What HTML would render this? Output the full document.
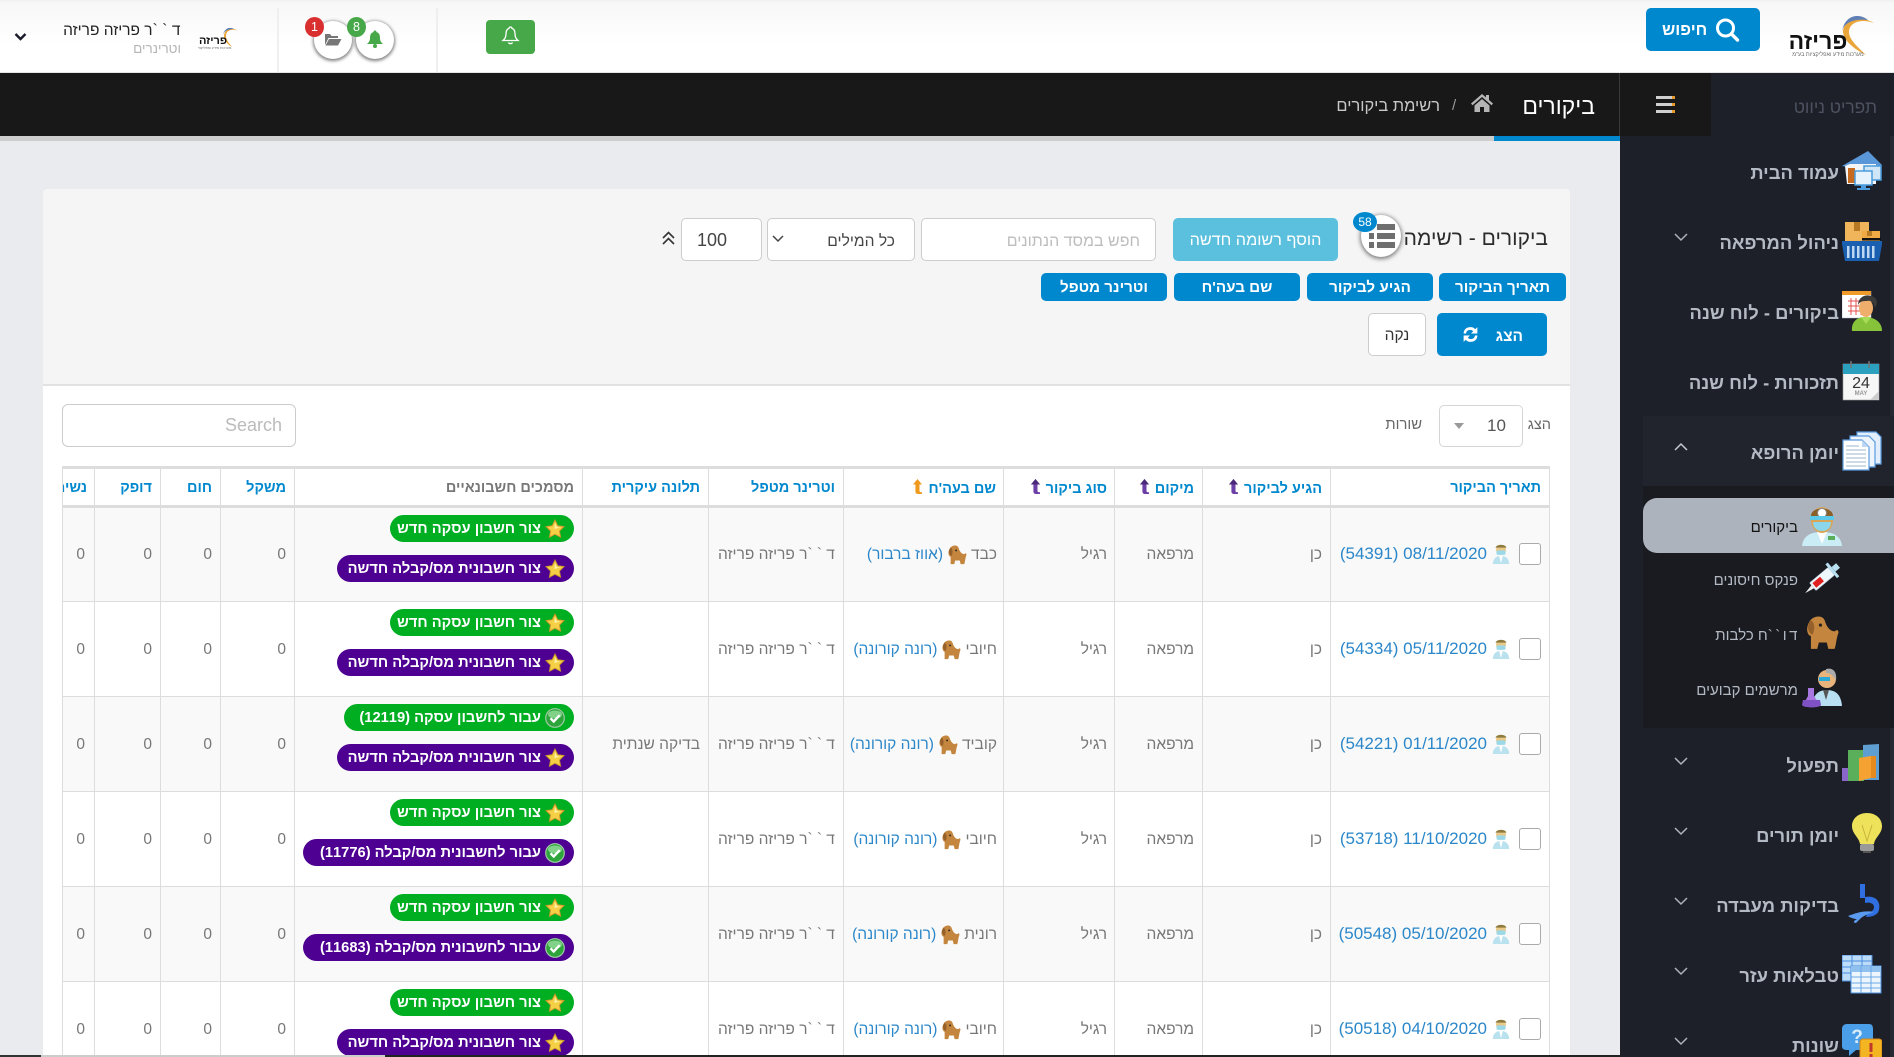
<!DOCTYPE html>
<html lang="he" dir="rtl"><head><meta charset="utf-8"><title>ביקורים</title>
<style>
*{box-sizing:border-box}
html,body{margin:0;padding:0;width:1894px;height:1057px;overflow:hidden;background:#e9ebef;font-family:"Liberation Sans","Noto Sans CJK JP",sans-serif;color:#333}
#w{position:absolute;left:0;top:0;width:1894px;height:1057px;overflow:hidden;background:#e9ebef}
.a{position:absolute;white-space:nowrap}
svg{display:block}
#top{left:0;top:0;width:1894px;height:73px;background:linear-gradient(#f1f1f2 0,#f1f1f2 1px,#f7f7f7 2px,#fff 45px);border-bottom:1px solid #e5e5e5}
.nav{font-weight:bold;font-size:18.4px;color:#b4bac4;right:55px;line-height:20px}
.sub{font-size:15px;color:#b4bac4;right:96px;line-height:20px}
.ic{width:40px;height:40px}
.chev{left:1673px;width:16px;height:10px}
table{position:absolute;left:62px;top:466px;width:1487px;table-layout:fixed;border-collapse:collapse;direction:rtl;background:#fff}
th{height:39px;padding:1px 8px 0;text-align:right;font-size:14.5px;color:#0088cf;border:1px solid #ddd;border-top:3px solid #ddd;border-bottom:3px solid #ddd;white-space:nowrap;overflow:hidden;font-weight:bold}
th:nth-child(4),th:nth-child(5){padding-right:7px}
th svg{display:inline-block;vertical-align:-2px;margin-right:5px}
td{height:95px;padding:1px 8px 0;text-align:right;font-size:15.5px;color:#777;border:1px solid #ddd;white-space:nowrap;overflow:hidden}
td:nth-child(4){padding-right:7px}
td:nth-child(5){padding-right:6px}
td:nth-child(12){padding-right:9px}
tr.o td{background:#f9f9f9}
td.p{vertical-align:top;padding-top:7px}
td a{color:#2b87c9}
td a.d{font-size:17px}
.bt{letter-spacing:4.2px;margin-right:-4px}
.pill{display:flex;align-items:center;height:27px;border-radius:14px;color:#fff;font-weight:bold;font-size:14.7px;padding:0 9px;margin-right:0;margin-left:auto;margin-bottom:13px;overflow:hidden}
.pill svg{margin-left:4px;flex:none}
.g{background:#00ae22}.v{background:#4e0092}
.cb{display:inline-block;width:22px;height:22px;border:1px solid #aaa;border-radius:3px;background:#fff;vertical-align:middle;position:relative;top:-1px}
.vi{display:inline-block;vertical-align:middle;margin:0 8px 0 4px;position:relative;top:-1px}
.dog{display:inline-block;vertical-align:middle;margin:0 4px}
.btn{background:#0088cf;color:#fff;border-radius:5px;text-align:center;font-size:15.2px;font-weight:bold;height:28px;line-height:30px;top:273px}
.inp{background:#fff;border:1px solid #ccc;border-radius:5px;height:43px;top:218px}
</style></head><body><div id="w">
<svg width="0" height="0" style="position:absolute"><defs>
<symbol id="star" viewBox="0 0 20 20"><path d="M10 1l2.8 5.7 6.2.9-4.5 4.4 1.1 6.2L10 15.3l-5.6 3 1.1-6.3L1 7.6l6.2-.9z" fill="#f5cf45" stroke="#c9952a" stroke-width=".9"/><path d="M10 4l1.8 4 3.6.5-6 1.5z" fill="#fdf3a8"/></symbol>
<symbol id="chk" viewBox="0 0 20 20"><circle cx="10" cy="10" r="9.3" fill="#2da53b" stroke="#9fc9a5" stroke-width="1.2"/><ellipse cx="10" cy="6.5" rx="7" ry="4" fill="#9fe0a4" opacity=".75"/><path d="M5.5 10.3l3.2 3.2 6-6.3" fill="none" stroke="#fff" stroke-width="2.4"/></symbol>
<symbol id="srt" viewBox="0 0 11 16"><path d="M5.5 0L10 5.5H7.5V12c0 1 .8 1.4 2.5 1.2V15H6c-1.6 0-2.6-1-2.6-2.6V5.5H1z" fill="#6b3fa6"/><path d="M5.5 0L10 5.5H1z" fill="#4a2a78"/></symbol>
<symbol id="srto" viewBox="0 0 11 16"><path d="M5.5 0L10 5.5H7.5V12c0 1 .8 1.4 2.5 1.2V15H6c-1.6 0-2.6-1-2.6-2.6V5.5H1z" fill="#ef9a1e"/></symbol>
<symbol id="vet" viewBox="0 0 22 24"><path d="M2 23c0-6 4-9 9-9s9 3 9 9z" fill="#b9e2ee"/><path d="M9 14l2 8 2-8z" fill="#fff"/><circle cx="11" cy="7.500" r="5.500" fill="#e9c98a"/><path d="M5 5c1-4 11-4 12 0z" fill="#8d7a3c"/><rect x="6" y="8" width="10" height="5" rx="2" fill="#9bd8e8"/></symbol>
<symbol id="dg" viewBox="0 0 22 24"><path d="M3 5c2-4 9-5 10 0 1 3 3 6 6 6 2-2 3 0 2 2-1 3-1 6-2 9h-4l-1-4-5 0-1 4H4l0-8C1 13 1 8 3 5z" fill="#c4863e"/><path d="M4 4c2 1 3 5 1 9-3-1-4-6-1-9z" fill="#96602a"/><circle cx="10" cy="7" r="1" fill="#222"/></symbol>
</defs></svg>

<!-- sidebar -->
<div class="a" style="left:1620px;top:73px;width:274px;height:984px;background:#1e2029"></div>
<div class="a" style="left:1890px;top:136px;width:4px;height:280px;background:#272a33"></div>
<div class="a" style="left:1890px;top:728px;width:4px;height:329px;background:#272a33"></div>

<!-- top bar -->
<div class="a" id="top"></div>
<div class="a" style="left:277px;top:8px;width:2px;height:64px;background:#efefef"></div>
<div class="a" style="left:436px;top:8px;width:2px;height:64px;background:#efefef"></div>
<svg class="a" style="left:14px;top:32px" width="13" height="10" viewBox="0 0 13 10"><path d="M1.500 2l5 5 5-5" fill="none" stroke="#1a1a2a" stroke-width="2.400"/></svg>
<div class="a" style="right:1713px;top:21px;font-size:15.500px;line-height:20px;color:#222"><span style="letter-spacing:4.500px;margin-right:-4px">ד``</span>ר פריזה פריזה</div>
<div class="a" style="right:1713px;top:40px;font-size:13.500px;line-height:18px;color:#b5b5b5">וטרינרים</div>
<!-- small logo -->
<svg class="a" style="left:198px;top:26px" width="42" height="26" viewBox="0 0 42 26"><path d="M40 5C33 2 28 5 28 10c0 4 3 7 6 11-5-3-8-7-8-11C26 4 33 0 40 5z" fill="#e9a63a"/><path d="M36 3C31 0 26 3 25 9 26 5 30 3 36 3z" fill="#5a7bb0"/><text x="15" y="18" text-anchor="middle" font-size="11" font-weight="bold" fill="#111" font-family="Liberation Sans">פריזה</text><text x="15" y="23" text-anchor="middle" font-size="3.500" fill="#666" font-family="Liberation Sans">מערכות מידע ואפליקציות</text></svg>
<!-- circles -->
<div class="a" style="left:314px;top:21px;width:38px;height:38px;border-radius:50%;background:#fff;box-shadow:0 1px 3px 1px rgba(0,0,0,.5)"></div>
<div class="a" style="left:356px;top:21px;width:38px;height:38px;border-radius:50%;background:#fff;box-shadow:0 1px 3px 1px rgba(0,0,0,.5)"></div>
<svg class="a" style="left:324px;top:33px" width="18" height="13" viewBox="0 0 18 13"><path d="M1 12V1h5l1.500 2H14v2H4.500L1 12z" fill="#777"/><path d="M1.500 12.500L5 6h12.500l-3.500 6.500z" fill="#777"/></svg>
<svg class="a" style="left:366px;top:30px" width="18" height="18" viewBox="0 0 18 18"><path d="M9 0.500c1 0 1.500.6 1.500 1.500 3 1 3.500 3.500 3.500 6 0 3 1 4 3 6H1c2-2 3-3 3-6 0-2.500.5-5 3.500-6C7.500 1.100 8 .5 9 .5z" fill="#47a849"/><circle cx="9" cy="16" r="2" fill="#47a849"/></svg>
<div class="a" style="left:305px;top:17px;width:19px;height:20px;border-radius:50%;background:#d92f2f;color:#fff;font-size:12.500px;line-height:20px;text-align:center;direction:ltr">1</div>
<div class="a" style="left:347px;top:17px;width:19px;height:20px;border-radius:50%;background:#47a849;color:#fff;font-size:12.500px;line-height:20px;text-align:center;direction:ltr">8</div>
<div class="a" style="left:486px;top:20px;width:49px;height:34px;border-radius:4px;background:#47a849"></div>
<svg class="a" style="left:501px;top:26px" width="19" height="20" viewBox="0 0 19 20"><path d="M9.500 1c.9 0 1.400.6 1.400 1.300 2.800.9 3.100 3.300 3.100 5.700 0 3.400 1.300 5 3 6.500H2c1.700-1.500 3-3.100 3-6.500 0-2.400.3-4.800 3.100-5.700C8.100 1.600 8.600 1 9.500 1z" fill="none" stroke="#fff" stroke-width="1.300"/><path d="M7.500 16.500c.5 1.500 3.500 1.500 4 0" fill="none" stroke="#fff" stroke-width="1.300"/></svg>
<div class="a" style="left:1646px;top:8px;width:114px;height:43px;background:#0088cf;border-radius:5px"></div>
<svg class="a" style="left:1715px;top:18px" width="25" height="24" viewBox="0 0 25 24"><circle cx="10.500" cy="10" r="8" fill="none" stroke="#fff" stroke-width="3"/><path d="M16.500 16l6 6" stroke="#fff" stroke-width="3.400" stroke-linecap="round"/></svg>
<div class="a" style="left:1662px;top:19px;font-size:16.500px;line-height:22px;font-weight:bold;color:#fff">חיפוש</div>
<!-- main logo -->
<svg class="a" style="left:1788px;top:12px" width="90" height="46" viewBox="0 0 90 46"><path d="M86 11C72 6 61 11 61 20c0 8 10 16 17 23C66 37 56 29 55 20 55 9 70 2 86 11z" fill="#eaa63a"/><path d="M80 8C70 0 56 4 54 20 55 12 64 6 80 8z" fill="#5f7fb5"/><text x="30" y="37" text-anchor="middle" font-size="23" font-weight="bold" fill="#111" font-family="Liberation Sans">פריזה</text><text x="40" y="44" text-anchor="middle" font-size="5.500" fill="#666" font-family="Liberation Sans">מערכות מידע ואפליקציות בע"מ</text></svg>

<!-- dark header -->
<div class="a" style="left:0;top:73px;width:1620px;height:63px;background:#181818"></div>
<div class="a" style="left:0;top:136px;width:1494px;height:5px;background:#cdcdcd"></div>
<div class="a" style="left:1494px;top:136px;width:126px;height:5px;background:#0088cf"></div>
<div class="a" style="left:1619px;top:73px;width:92px;height:63px;background:#181818;border-left:1px solid #3a3a3a"></div>
<div class="a" style="left:1656px;top:96px;width:19px;height:3px;background:linear-gradient(90deg,#cfcfcf 85%,#e59a2a 85%)"></div>
<div class="a" style="left:1656px;top:103px;width:19px;height:3px;background:linear-gradient(90deg,#cfcfcf 85%,#e59a2a 85%)"></div>
<div class="a" style="left:1656px;top:110px;width:19px;height:3px;background:linear-gradient(90deg,#cfcfcf 85%,#e59a2a 85%)"></div>
<div class="a" style="right:17px;top:97px;font-size:17.200px;line-height:20px;color:#4d5260">תפריט ניווט</div>
<div class="a" style="right:299px;top:92px;font-size:23px;line-height:28px;color:#fff">ביקורים</div>
<svg class="a" style="left:1470px;top:93px" width="24" height="20" viewBox="0 0 24 20"><path d="M12 1L1 10.500l1.500 1.700L12 4l9.500 8.200 1.500-1.700-4-3.500V2h-3v2.400z" fill="#b5b5b5"/><path d="M4.500 12.500L12 6l7.500 6.500V19h-5.500v-5h-4v5H4.500z" fill="#b5b5b5"/></svg>
<div class="a" style="left:1452px;top:96px;font-size:15px;line-height:20px;color:#999">/</div>
<div class="a" style="right:454px;top:96px;font-size:16.400px;line-height:20px;color:#c8c8c8">רשימת ביקורים</div>

<!-- panel -->
<div class="a" style="left:43px;top:189px;width:1527px;height:197px;background:#f5f5f5;border-bottom:2px solid #e2e2e2;border-radius:4px 4px 0 0"></div>
<div class="a" style="left:43px;top:386px;width:1527px;height:671px;background:#fff"></div>
<div class="a" style="right:346px;top:225px;font-size:21px;line-height:28px;color:#2b2b2b">ביקורים - רשימה</div>
<div class="a" style="left:1361px;top:215px;width:40px;height:42px;border-radius:50%;background:#fff;box-shadow:0 1px 4px 1px rgba(0,0,0,.5)"></div>
<svg class="a" style="left:1369px;top:224px" width="26" height="25" viewBox="0 0 26 25"><g fill="#6f6f6f"><rect x="8" y="0" width="18" height="6"/><rect x="8" y="9" width="18" height="6"/><rect x="8" y="18" width="18" height="6"/><rect x="0" y="9" width="5" height="6"/><rect x="0" y="18" width="5" height="6"/></g></svg>
<div class="a" style="left:1353px;top:212px;width:24px;height:20px;border-radius:50%;background:#0088cf;color:#fff;font-size:12px;line-height:20px;text-align:center;direction:ltr">58</div>
<div class="a" style="left:1173px;top:218px;width:165px;height:43px;border-radius:5px;background:#5bc0de;color:#fff;font-size:16.200px;line-height:45px;text-align:center">הוסף רשומה חדשה</div>
<div class="a inp" style="left:921px;width:235px;font-size:16px;line-height:45px;padding-right:15px;color:#bdbdbd">חפש במסד הנתונים</div>
<div class="a inp" style="left:767px;width:148px;font-size:15.600px;line-height:45px;padding-right:19px;color:#444">כל המילים</div>
<svg class="a" style="left:772px;top:235px" width="12" height="8" viewBox="0 0 12 8"><path d="M1 1l5 5 5-5" fill="none" stroke="#444" stroke-width="1.500"/></svg>
<div class="a inp" style="left:681px;width:81px;font-size:18px;line-height:43px;text-align:left;padding-left:15px;color:#444;direction:ltr">100</div>
<svg class="a" style="left:661px;top:231px" width="15" height="15" viewBox="0 0 15 15"><path d="M2 7l5.500-5.500L13 7M2 13l5.500-5.500L13 13" fill="none" stroke="#333" stroke-width="1.600"/></svg>
<div class="a btn" style="left:1439px;width:127px">תאריך הביקור</div>
<div class="a btn" style="left:1307px;width:126px">הגיע לביקור</div>
<div class="a btn" style="left:1174px;width:126px">שם בעה'ח</div>
<div class="a btn" style="left:1041px;width:126px">וטרינר מטפל</div>
<div class="a" style="left:1437px;top:313px;width:110px;height:43px;border-radius:5px;background:#0088cf"></div>
<div class="a" style="right:371px;top:327px;font-size:15.500px;font-weight:bold;line-height:20px;color:#fff">הצג</div>
<svg class="a" style="left:1461px;top:325px" width="19" height="19" viewBox="0 0 17 18"><path d="M2 8C2 4 5 2 8.500 2c2 0 3.500.7 4.500 2l2-2v6H9l2-2c-.7-1-1.700-1.400-2.700-1.400C6 4.600 4.500 6 4.300 8zM15 10c0 4-3 6-6.500 6-2 0-3.500-.7-4.500-2l-2 2v-6h6l-2 2c.7 1 1.700 1.400 2.700 1.400 2.300 0 3.800-1.400 4-3.400z" fill="#fff"/></svg>
<div class="a" style="left:1368px;top:313px;width:58px;height:43px;border-radius:5px;background:#fff;border:1px solid #ccc;font-size:15.500px;line-height:44px;text-align:center;color:#333">נקה</div>

<!-- table controls -->
<div class="a" style="right:343px;top:415px;font-size:14.500px;line-height:20px;color:#666">הצג</div>
<div class="a" style="left:1439px;top:405px;width:84px;height:42px;border:1px solid #d5d5d5;border-radius:5px;background:#fff"></div>
<div class="a" style="left:1487px;top:415px;font-size:17px;line-height:22px;color:#555;direction:ltr">10</div>
<svg class="a" style="left:1454px;top:423px" width="10" height="6" viewBox="0 0 10 6"><path d="M0 0h10L5 6z" fill="#999"/></svg>
<div class="a" style="right:472px;top:415px;font-size:14.800px;line-height:20px;color:#666">שורות</div>
<div class="a" style="left:62px;top:404px;width:234px;height:43px;border:1px solid #ccc;border-radius:6px;background:#fff;font-size:18px;line-height:41px;padding-left:162px;color:#bbb;direction:ltr">Search</div>

<table>
<colgroup><col style="width:219px"><col style="width:128px"><col style="width:88px"><col style="width:111px"><col style="width:160px"><col style="width:135px"><col style="width:126px"><col style="width:288px"><col style="width:74px"><col style="width:60px"><col style="width:66px"><col style="width:32px"></colgroup>
<tr>
<th>תאריך הביקור</th>
<th>הגיע לביקור<svg width="11" height="16"><use href="#srt"/></svg></th>
<th>מיקום<svg width="11" height="16"><use href="#srt"/></svg></th>
<th>סוג ביקור<svg width="11" height="16"><use href="#srt"/></svg></th>
<th>שם בעה'ח<svg width="11" height="16"><use href="#srto"/></svg></th>
<th>וטרינר מטפל</th>
<th>תלונה עיקרית</th>
<th style="color:#777">מסמכים חשבונאיים</th>
<th>משקל</th><th>חום</th><th>דופק</th><th style="padding:1px 7px 0 0">נשימה</th>
</tr>
<tr class="o">
<td><span class="cb"></span><svg class="vi" width="20" height="22"><use href="#vet"/></svg><a class="d">08/11/2020 (54391)</a></td><td>כן</td><td>מרפאה</td><td>רגיל</td>
<td>כבד<svg class="dog" width="20" height="22"><use href="#dg"/></svg><a>(אווז ברבור)</a></td><td><span class="bt">ד``</span>ר פריזה פריזה</td><td></td>
<td class="p"><div class="pill g" style="width:184px"><svg width="20" height="20"><use href="#star"/></svg>צור חשבון עסקה חדש</div><div class="pill v" style="width:237px"><svg width="20" height="20"><use href="#star"/></svg>צור חשבונית מס/קבלה חדשה</div></td>
<td>0</td><td>0</td><td>0</td><td>0</td></tr>
<tr>
<td><span class="cb"></span><svg class="vi" width="20" height="22"><use href="#vet"/></svg><a class="d">05/11/2020 (54334)</a></td><td>כן</td><td>מרפאה</td><td>רגיל</td>
<td>חיובי<svg class="dog" width="20" height="22"><use href="#dg"/></svg><a>(רונה קורונה)</a></td><td><span class="bt">ד``</span>ר פריזה פריזה</td><td></td>
<td class="p"><div class="pill g" style="width:184px"><svg width="20" height="20"><use href="#star"/></svg>צור חשבון עסקה חדש</div><div class="pill v" style="width:237px"><svg width="20" height="20"><use href="#star"/></svg>צור חשבונית מס/קבלה חדשה</div></td>
<td>0</td><td>0</td><td>0</td><td>0</td></tr>
<tr class="o">
<td><span class="cb"></span><svg class="vi" width="20" height="22"><use href="#vet"/></svg><a class="d">01/11/2020 (54221)</a></td><td>כן</td><td>מרפאה</td><td>רגיל</td>
<td>קוביד<svg class="dog" width="20" height="22"><use href="#dg"/></svg><a>(רונה קורונה)</a></td><td><span class="bt">ד``</span>ר פריזה פריזה</td><td>בדיקה שנתית</td>
<td class="p"><div class="pill g" style="width:230px"><svg width="20" height="20"><use href="#chk"/></svg>עבור לחשבון עסקה (12119)</div><div class="pill v" style="width:237px"><svg width="20" height="20"><use href="#star"/></svg>צור חשבונית מס/קבלה חדשה</div></td>
<td>0</td><td>0</td><td>0</td><td>0</td></tr>
<tr>
<td><span class="cb"></span><svg class="vi" width="20" height="22"><use href="#vet"/></svg><a class="d">11/10/2020 (53718)</a></td><td>כן</td><td>מרפאה</td><td>רגיל</td>
<td>חיובי<svg class="dog" width="20" height="22"><use href="#dg"/></svg><a>(רונה קורונה)</a></td><td><span class="bt">ד``</span>ר פריזה פריזה</td><td></td>
<td class="p"><div class="pill g" style="width:184px"><svg width="20" height="20"><use href="#star"/></svg>צור חשבון עסקה חדש</div><div class="pill v" style="width:271px"><svg width="20" height="20"><use href="#chk"/></svg>עבור לחשבונית מס/קבלה (11776)</div></td>
<td>0</td><td>0</td><td>0</td><td>0</td></tr>
<tr class="o">
<td><span class="cb"></span><svg class="vi" width="20" height="22"><use href="#vet"/></svg><a class="d">05/10/2020 (50548)</a></td><td>כן</td><td>מרפאה</td><td>רגיל</td>
<td>רונית<svg class="dog" width="20" height="22"><use href="#dg"/></svg><a>(רונה קורונה)</a></td><td><span class="bt">ד``</span>ר פריזה פריזה</td><td></td>
<td class="p"><div class="pill g" style="width:184px"><svg width="20" height="20"><use href="#star"/></svg>צור חשבון עסקה חדש</div><div class="pill v" style="width:271px"><svg width="20" height="20"><use href="#chk"/></svg>עבור לחשבונית מס/קבלה (11683)</div></td>
<td>0</td><td>0</td><td>0</td><td>0</td></tr>
<tr>
<td><span class="cb"></span><svg class="vi" width="20" height="22"><use href="#vet"/></svg><a class="d">04/10/2020 (50518)</a></td><td>כן</td><td>מרפאה</td><td>רגיל</td>
<td>חיובי<svg class="dog" width="20" height="22"><use href="#dg"/></svg><a>(רונה קורונה)</a></td><td><span class="bt">ד``</span>ר פריזה פריזה</td><td></td>
<td class="p"><div class="pill g" style="width:184px"><svg width="20" height="20"><use href="#star"/></svg>צור חשבון עסקה חדש</div><div class="pill v" style="width:237px"><svg width="20" height="20"><use href="#star"/></svg>צור חשבונית מס/קבלה חדשה</div></td>
<td>0</td><td>0</td><td>0</td><td>0</td></tr>
</table>
<!-- bottom strip -->
<div class="a" style="left:0;top:1055px;width:41px;height:2px;background:#333"></div>
<div class="a" style="left:41px;top:1055px;width:344px;height:2px;background:#ccc"></div>
<div class="a" style="left:385px;top:1055px;width:1235px;height:2px;background:#222"></div>

<!-- sidebar content -->
<div class="a" style="left:1643px;top:416px;width:251px;height:70px;background:#21242c"></div>
<div class="a" style="left:1643px;top:486px;width:251px;height:242px;background:#191b21"></div>
<div class="a" style="left:1643px;top:498px;width:251px;height:55px;background:#adb3bd;border-radius:14px 0 0 14px"></div>

<div class="a nav" style="top:163px">עמוד הבית</div>
<div class="a nav" style="top:233px">ניהול המרפאה</div>
<div class="a nav" style="top:303px">ביקורים - לוח שנה</div>
<div class="a nav" style="top:373px">תזכורות - לוח שנה</div>
<div class="a nav" style="top:443px">יומן הרופא</div>
<div class="a nav" style="top:756px">תפעול</div>
<div class="a nav" style="top:826px">יומן תורים</div>
<div class="a nav" style="top:896px">בדיקות מעבדה</div>
<div class="a nav" style="top:966px">טבלאות עזר</div>
<div class="a nav" style="top:1036px">שונות</div>
<div class="a sub" style="top:518px;color:#111">ביקורים</div>
<div class="a sub" style="top:571px">פנקס חיסונים</div>
<div class="a sub" style="top:626px"><span style="letter-spacing:2.500px;margin-right:-2px">דו``</span>ח כלבות</div>
<div class="a sub" style="top:681px">מרשמים קבועים</div>

<svg class="a chev" style="top:232px" viewBox="0 0 16 10"><path d="M2 2l6 6 6-6" fill="none" stroke="#adb3bd" stroke-width="1.500"/></svg>
<svg class="a chev" style="top:442px" viewBox="0 0 16 10"><path d="M2 8l6-6 6 6" fill="none" stroke="#c5cad2" stroke-width="1.500"/></svg>
<svg class="a chev" style="top:756px" viewBox="0 0 16 10"><path d="M2 2l6 6 6-6" fill="none" stroke="#adb3bd" stroke-width="1.500"/></svg>
<svg class="a chev" style="top:826px" viewBox="0 0 16 10"><path d="M2 2l6 6 6-6" fill="none" stroke="#adb3bd" stroke-width="1.500"/></svg>
<svg class="a chev" style="top:896px" viewBox="0 0 16 10"><path d="M2 2l6 6 6-6" fill="none" stroke="#adb3bd" stroke-width="1.500"/></svg>
<svg class="a chev" style="top:966px" viewBox="0 0 16 10"><path d="M2 2l6 6 6-6" fill="none" stroke="#adb3bd" stroke-width="1.500"/></svg>
<svg class="a chev" style="top:1036px" viewBox="0 0 16 10"><path d="M2 2l6 6 6-6" fill="none" stroke="#adb3bd" stroke-width="1.500"/></svg>

<!-- house -->
<svg class="a ic" style="left:1842px;top:151px" viewBox="0 0 40 40"><path d="M0 15L26 0l14 14-3 2H6z" fill="#5a97d8"/><path d="M3 15l5-2h26v20H5z" fill="#f5f5f5"/><rect x="6" y="17" width="7" height="15" fill="#c56a1e"/><rect x="22" y="15" width="17" height="14" fill="#cfe6f7" stroke="#4a9bdc" stroke-width="1.500"/><rect x="13" y="20" width="17" height="14" fill="#e6f3fc" stroke="#4a9bdc" stroke-width="1.500"/><rect x="19" y="34" width="5" height="3" fill="#4a9bdc"/><rect x="15" y="37" width="13" height="2" fill="#4a9bdc"/></svg>
<!-- basket -->
<svg class="a ic" style="left:1842px;top:222px" viewBox="0 0 40 40"><rect x="3" y="0" width="24" height="20" fill="#f0b45a"/><rect x="12" y="0" width="6" height="9" fill="#b67a25"/><rect x="20" y="9" width="18" height="12" fill="#eea944"/><rect x="25" y="9" width="5" height="5" fill="#b67a25"/><rect x="20" y="16" width="19" height="2.500" fill="#111"/><path d="M0 19h40v3l-3 17H3L0 22z" fill="#1b5fb0"/><g fill="#bcd8f3"><rect x="5" y="24" width="2.500" height="12"/><rect x="10" y="24" width="2.500" height="12"/><rect x="15" y="24" width="2.500" height="12"/><rect x="20" y="24" width="2.500" height="12"/><rect x="25" y="24" width="2.500" height="12"/><rect x="30" y="24" width="2.500" height="12"/></g></svg>
<!-- calendar person -->
<svg class="a ic" style="left:1842px;top:291px" viewBox="0 0 40 40"><rect x="0" y="0" width="29" height="27" fill="#fff" stroke="#aac" stroke-width=".5"/><rect x="0" y="0" width="29" height="4" fill="#f09a2b"/><g fill="none" stroke="#e25050"><path d="M6 10h16M6 15h16M6 20h16M9 7v17M14 7v17M19 7v17"/></g><path d="M10 40c-1-9 5-14 13-14s17 4 17 14z" fill="#86c33a"/><path d="M19 26l5 7 5-7z" fill="#a9dc58"/><ellipse cx="24" cy="17" rx="7" ry="9" fill="#f0ae6c"/><path d="M16 14c0-8 8-12 16-8 3 2 4 6 1 11-1-5-4-8-8-7-4 0-7 0-9 4z" fill="#3a3a3a"/></svg>
<!-- calendar 24 -->
<svg class="a ic" style="left:1842px;top:361px" viewBox="0 0 40 40"><rect x="1" y="3" width="36" height="36" fill="#f6f6f6" stroke="#999" stroke-width=".6"/><rect x="1" y="3" width="36" height="10" fill="#2ca0bf"/><path d="M9 0v7M27 0v7" stroke="#777" stroke-width="1.500"/><text x="19" y="27" text-anchor="middle" font-size="16" fill="#333" font-family="Liberation Sans" direction="ltr">24</text><text x="19" y="34" text-anchor="middle" font-size="6" font-weight="bold" fill="#999" font-family="Liberation Sans" direction="ltr">MAY</text><path d="M37 30v9h-9z" fill="#ccc"/></svg>
<!-- docs -->
<svg class="a ic" style="left:1842px;top:431px" viewBox="0 0 40 40"><g stroke="#5a9be0" stroke-width="1.200"><path d="M15 1h19l5 5v27H15z" fill="#e2eefb"/><path d="M8 5h19l6 6v25H8z" fill="#eef5fd"/><path d="M1 9h19l7 7v23H1z" fill="#fff"/></g><path d="M20 9v7h7z" fill="#bcd6f3"/><g stroke="#9db4cc"><path d="M4 19h20M4 23h20M4 27h20M4 31h20M4 35h20M4 15h13"/></g></svg>
<!-- doctor -->
<svg class="a" style="left:1802px;top:506px" width="40" height="40" viewBox="0 0 40 40"><path d="M0 40c1-9 7-14 20-14s19 5 20 14z" fill="#c9ecf5"/><path d="M15 26l5 12 5-12z" fill="#fff"/><rect x="26" y="30" width="7" height="4" fill="#5aae5a"/><ellipse cx="20" cy="14" rx="11" ry="13" fill="#d8a656"/><path d="M9 10C9 0 31 0 31 10z" fill="#8a5f28"/><circle cx="20" cy="7" r="4.500" fill="#fff" stroke="#888"/><rect x="8" y="10" width="24" height="4" fill="#5cc8ea"/><path d="M11 16h18c0 6-4 9-9 9s-9-3-9-9z" fill="#8bd6ea"/></svg>
<!-- syringe -->
<svg class="a" style="left:1802px;top:561px" width="40" height="36" viewBox="0 0 40 36"><g transform="rotate(-40 20 18)"><rect x="8" y="13" width="24" height="10" rx="1" fill="#eef7fb" stroke="#bcd" stroke-width=".6"/><rect x="10" y="15" width="10" height="6" fill="#e02020"/><rect x="32" y="9" width="3" height="18" fill="#b8e0f2"/><rect x="35" y="15" width="6" height="6" fill="#b8e0f2"/><path d="M8 16l-10 2 10 2z" fill="#eee"/></g></svg>
<!-- dog -->
<svg class="a" style="left:1803px;top:614px" width="38" height="38" viewBox="0 0 22 24"><use href="#dg"/></svg>
<!-- pharmacist -->
<svg class="a" style="left:1802px;top:668px" width="40" height="40" viewBox="0 0 40 40"><path d="M10 38c1-12 7-16 15-16s14 4 15 16z" fill="#b9e0f2"/><path d="M21 22l3 10 3-10z" fill="#555"/><circle cx="25" cy="11" r="9" fill="#e9b47c"/><path d="M24 1c8-2 11 4 10 11-2-3-5-7-10-7z" fill="#aaa"/><rect x="17" y="9" width="11" height="4" fill="#2aa8d8"/><path d="M6 20h6v8l6 9c0 3-16 3-17 0l5-9z" fill="#a878e0"/><path d="M1 32h17l1 5c-1 3-18 3-19 0z" fill="#7e52c4"/></svg>
<!-- bars -->
<svg class="a ic" style="left:1842px;top:744px" viewBox="0 0 40 40"><path d="M0 24h16v13H0z" fill="#8a66c8"/><path d="M6 6h16v31H6z" fill="#5ab05a"/><path d="M21 1l16-1v36H21z" fill="#5f9ed0"/><path d="M17 14l12-2v22l-12 3z" fill="#f5a233"/><path d="M29 12l5 0v22h-5z" fill="#e58a1f"/></svg>
<!-- bulb -->
<svg class="a ic" style="left:1847px;top:813px" viewBox="0 0 32 40"><path d="M16 0c9 0 15 6 15 13 0 8-7 11-8 18H9C8 24 1 21 1 13 1 6 7 0 16 0z" fill="#eee25a"/><path d="M11 12l5 16 5-16" fill="none" stroke="#c8b53c"/><rect x="9" y="31" width="14" height="7" rx="2" fill="#9a9a9a"/><rect x="12" y="38" width="8" height="2" fill="#555"/></svg>
<!-- microscope -->
<svg class="a ic" style="left:1845px;top:884px" viewBox="0 0 34 40"><path d="M12 0h5v14h-5z" fill="#2f6fe0"/><path d="M17 13c10-2 16 4 14 13-1 5-7 7-13 7l2-5c4 0 6-2 6-5 0-4-5-5-9-4z" fill="#2f6fe0"/><path d="M0 32c8-3 16-6 26-4-6 2-11 4-14 7l-4 4c-3 0-3-2 1-4-3 0-6-1-9-3z" fill="#5a9bf0"/></svg>
<!-- table -->
<svg class="a ic" style="left:1842px;top:955px" viewBox="0 0 40 40"><rect x="0" y="0" width="30" height="26" fill="#bcdcf7" stroke="#4a8ee0"/><path d="M0 6h30M0 12h30M0 18h30M10 0v26M20 0v26" stroke="#4a8ee0"/><rect x="9" y="11" width="30" height="27" fill="#eef6fd" stroke="#4a8ee0"/><rect x="9" y="11" width="30" height="6" fill="#8fc0ee"/><path d="M9 22h30M9 28h30M9 33h30M19 11v27M29 11v27" stroke="#6aa8e8"/></svg>
<!-- question -->
<svg class="a ic" style="left:1842px;top:1024px" viewBox="0 0 40 40"><path d="M5 0h22c3 0 4 2 4 5v17c0 3-1 4-4 4H14l-7 6v-6H5c-3 0-5-1-5-4V5c0-3 2-5 5-5z" fill="#4a9fe8"/><text x="15" y="19" text-anchor="middle" font-size="19" font-weight="bold" fill="#d8ecfb" font-family="Liberation Sans" direction="ltr">?</text><rect x="18" y="15" width="22" height="22" rx="3" fill="#f4b522" stroke="#d0851a"/><rect x="27.500" y="19" width="3" height="9" fill="#c0392b"/><rect x="27.500" y="30" width="3" height="3" fill="#c0392b"/></svg>
</div></body></html>
